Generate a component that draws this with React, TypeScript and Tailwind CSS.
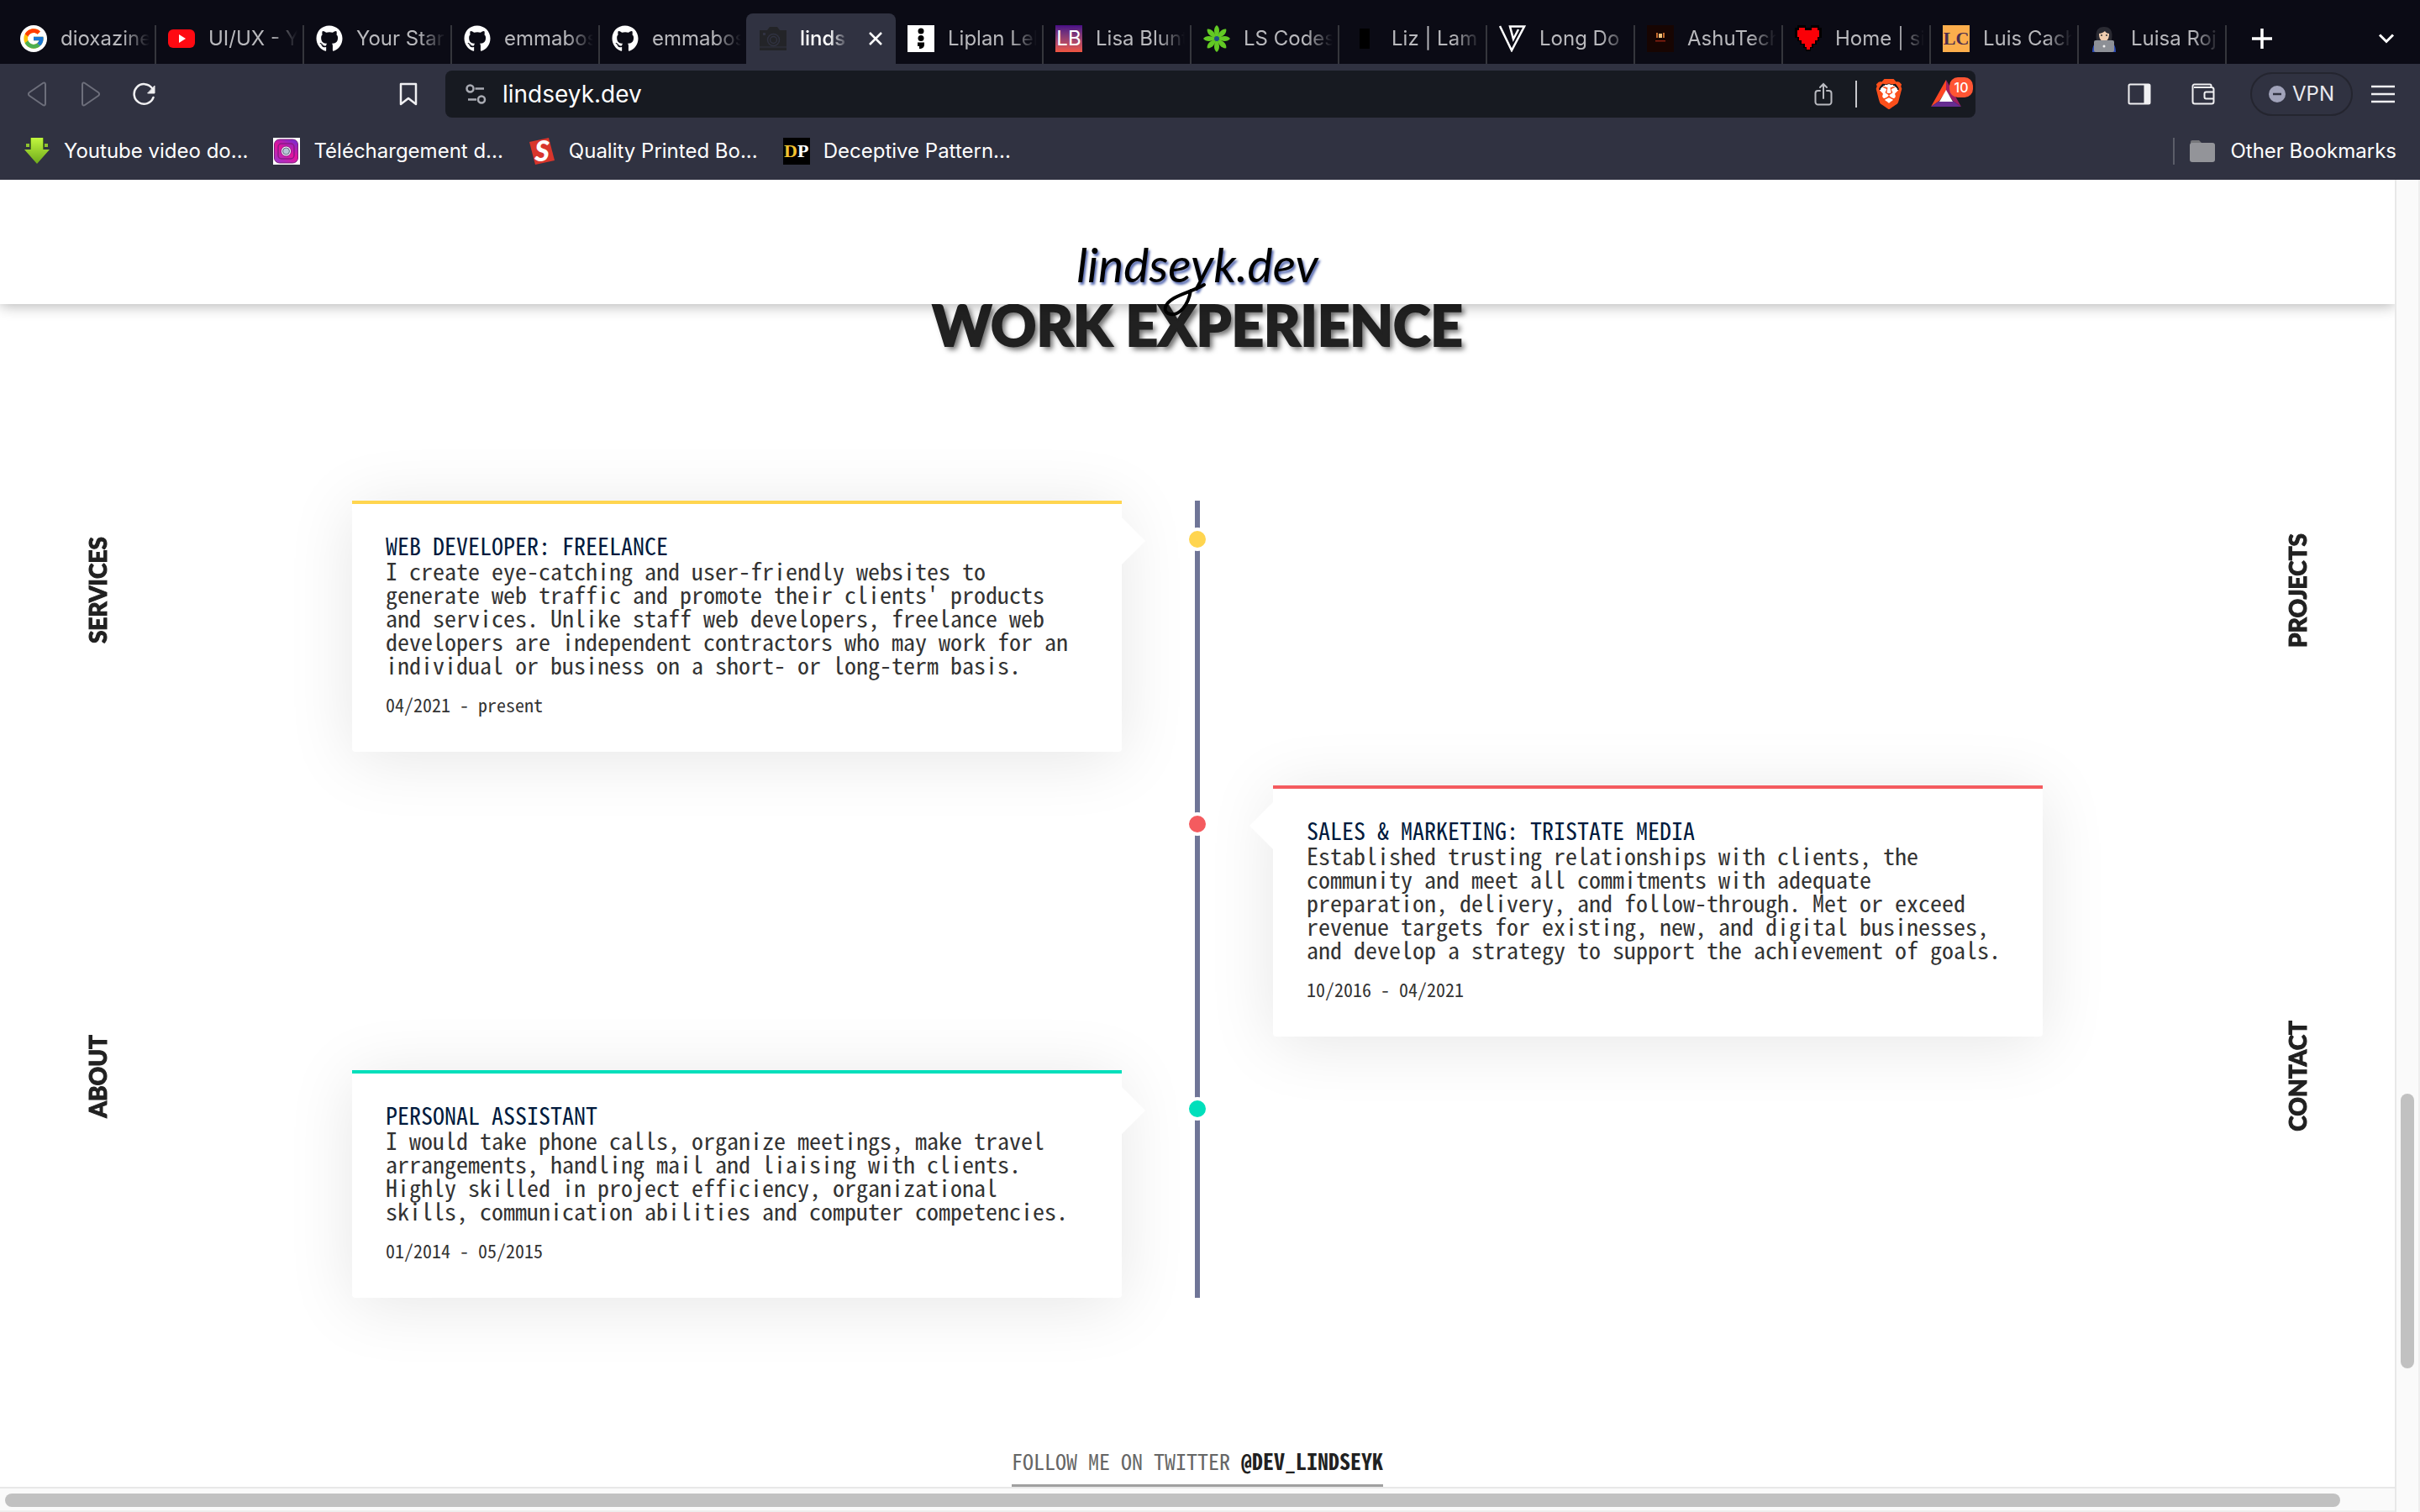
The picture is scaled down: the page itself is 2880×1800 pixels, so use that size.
import type { ReactNode } from "react";
import { FcGoogle } from "react-icons/fc";
import { FaGithub } from "react-icons/fa";
import { SiBrave } from "react-icons/si";

const mono = "font-['Noto_Sans_Mono_CJK_SC','Liberation_Mono',monospace]";

function Youtube() {
  return (
    <svg viewBox="0 0 32 32" className="size-8">
      <rect y="5" width="32" height="22" rx="6" fill="#ff0a12" />
      <path d="M13 11v10l8-5z" fill="#fff" />
    </svg>
  );
}

function Camera() {
  return (
    <svg viewBox="0 0 32 32" className="size-8">
      <path d="M0 6h9l3-4h9l3 4h8v24H0z" fill="#232428" />
      <circle cx="16.500" cy="17.500" r="7" fill="none" stroke="#303241" strokeWidth="1.500" />
      <circle cx="16.500" cy="17.500" r="4" fill="none" stroke="#303241" strokeWidth="1.500" />
      <path d="M4 9h3v3H4z" fill="#303241" />
      <path d="M0 26h32" stroke="#303241" />
    </svg>
  );
}

function Semicolon() {
  return (
    <span className="flex size-8 items-center justify-center bg-white">
      <svg viewBox="0 0 32 32" className="size-8">
        <circle cx="16" cy="7" r="3.500" />
        <circle cx="16" cy="15.500" r="3.500" />
        <path d="M12 20.500h8V23c0 3-2 5-6 5v-3h-2z" />
      </svg>
    </span>
  );
}

function Flower() {
  return (
    <svg viewBox="0 0 32 32" className="size-8">
      {[0, 45, 90, 135, 180, 225, 270, 315].map((a) => (
        <path key={a} d="M16 16C12 9 12 3 16 0C20 3 20 9 16 16z" fill="#62c924" transform={`rotate(${a} 16 16)`} />
      ))}
      <circle cx="16" cy="16" r="3" fill="#1d4f86" />
    </svg>
  );
}

function Vee() {
  return (
    <svg viewBox="0 0 32 32" className="size-8" fill="none" stroke="#fff" strokeWidth="2.500">
      <path d="M1 1l14 29L30 1.500H13l4 15 6-11.500" />
    </svg>
  );
}

function Ashu() {
  return (
    <svg viewBox="0 0 32 32" className="size-8">
      <path d="M0 0h32v32H0z" fill="#170502" />
      <path d="M11 9h2v6h-2zM19 9h2v6h-2z" fill="#c46a2c" />
      <path d="M14 10h4v5h-4z" fill="#f1c27a" />
      <path d="M10 18h12v1.500H10z" fill="#8a2010" />
    </svg>
  );
}

function Heart() {
  return (
    <svg viewBox="0 0 32 32" className="size-8">
      <path d="M3 0h10v3h6V0h10v3h3v12h-3v4h-3v4h-4v4h-3v4h-6v-4h-3v-4H6v-4H3v-4H0V3h3z" fill="#000" />
      <path d="M5 3h7v3h8V3h7v3h2v8h-2v4h-3v4h-4v4h-2v3h-4v-3h-2v-4H8v-4H5v-4H3V6h2z" fill="#fb0007" />
    </svg>
  );
}

function Technologist() {
  return (
    <svg viewBox="0 0 32 32" className="size-8">
      <path d="M7 18C5 6 9 2 16 2s11 4 9 16z" fill="#2b2b33" />
      <path d="M2 32c0-8 3-12 8-13h12c5 1 8 5 8 13z" fill="#2a49b8" />
      <path d="M10 10c2 0 5-1 7-3 1 2 3 3 5 3 0 6-2 9-6 9s-6-3-6-9z" fill="#f1cdb0" />
      <circle cx="13" cy="12" r="1" fill="#333" />
      <circle cx="19" cy="12" r="1" fill="#333" />
      <rect x="4" y="18" width="24" height="14" rx="2" fill="#8d9096" />
      <circle cx="16" cy="25" r="1.500" fill="#f2f2f2" />
    </svg>
  );
}

const github = <FaGithub className="size-8 text-white" />;

const tabs: { title: string; icon: ReactNode; active?: boolean }[] = [
  {
    title: "dioxazine",
    icon: (
      <span className="flex size-8 items-center justify-center rounded-full bg-white">
        <FcGoogle className="size-7" />
      </span>
    ),
  },
  { title: "UI/UX - Y", icon: <Youtube /> },
  { title: "Your Star", icon: github },
  { title: "emmabos", icon: github },
  { title: "emmabos", icon: github },
  { title: "linds", icon: <Camera />, active: true },
  { title: "Liplan Lel", icon: <Semicolon /> },
  {
    title: "Lisa Blunt",
    icon: (
      <span className="flex size-8 items-center justify-center bg-linear-to-b from-[#4a0a86] to-[#f0553f] text-[24px] leading-8 text-white">
        LB
      </span>
    ),
  },
  { title: "LS Codes", icon: <Flower /> },
  { title: "Liz | Lam", icon: <span className="mx-auto h-6 w-3 bg-black" /> },
  { title: "Long Do", icon: <Vee /> },
  { title: "AshuTech", icon: <Ashu /> },
  { title: "Home | si", icon: <Heart /> },
  {
    title: "Luis Cach",
    icon: (
      <span className="flex size-8 items-center justify-center bg-[#fcae4c] font-['Liberation_Serif',serif] text-[22px] leading-8 font-bold text-[#4a2c4e]">
        LC
      </span>
    ),
  },
  { title: "Luisa Roj", icon: <Technologist /> },
];

function TabStrip() {
  return (
    <div role="tablist" className="flex h-[76px] items-end bg-[#0b0b15] pl-2">
      {tabs.map((t, i) => (
        <div
          key={i}
          className={
            t.active
              ? "-mr-0.5 flex h-[60px] w-[178px] shrink-0 items-center rounded-t-lg bg-[#303241] px-4"
              : "flex h-[60px] w-44 shrink-0 items-center pl-4"
          }
        >
          <button
            role="tab"
            aria-selected={!!t.active}
            className="flex h-8 min-w-0 flex-1 items-center gap-4 self-center text-left"
          >
            <span className="flex w-8 shrink-0">{t.icon}</span>
            <span
              className={
                t.active
                  ? "w-[58px] overflow-hidden font-medium whitespace-nowrap text-white [mask-image:linear-gradient(to_right,black_60%,transparent)]"
                  : "w-[106px] overflow-hidden whitespace-nowrap text-[#b9b9bd] [mask-image:linear-gradient(to_right,black_70%,transparent)]"
              }
            >
              {t.title}
            </span>
          </button>
          {t.active ? (
            <button aria-label="Close tab" className="ml-auto">
              <svg viewBox="0 0 16 16" className="size-4" stroke="#fff" strokeWidth="2.500">
                <path d="M1 1l14 14M15 1L1 15" />
              </svg>
            </button>
          ) : (
            i !== 4 && <span className="-mr-0.5 ml-auto h-[46px] w-0.5 shrink-0 self-end bg-[#35363c]" />
          )}
        </div>
      ))}
      <button aria-label="New tab" className="ml-3 flex h-[60px] w-16 items-center justify-center">
        <svg viewBox="0 0 26 26" className="size-[26px]" stroke="#fff" strokeWidth="3.500">
          <path d="M13 1v24M1 13h24" />
        </svg>
      </button>
      <button aria-label="Search tabs" className="mr-2 ml-auto flex h-[60px] w-16 items-center justify-center">
        <svg viewBox="0 0 20 12" className="h-3 w-5" fill="none" stroke="#fff" strokeWidth="3">
          <path d="M2 1.500l8 8 8-8" />
        </svg>
      </button>
    </div>
  );
}

function Toolbar() {
  return (
    <div className="flex h-[72px] items-center">
      <div className="flex w-[530px] items-center px-3">
        <button aria-label="Back" className="flex w-16 justify-center">
          <svg viewBox="0 0 24 30" className="h-[30px] w-6" fill="none" stroke="#6d6f7b" strokeWidth="2" strokeLinejoin="round">
            <path d="M22 3.500v23c0 2-1.500 2.500-3 1.500L3 17c-1.500-1-1.500-3 0-4L19 2c1.500-1 3-.5 3 1.500z" />
          </svg>
        </button>
        <button aria-label="Forward" className="flex w-16 justify-center">
          <svg viewBox="0 0 24 30" className="h-[30px] w-6" fill="none" stroke="#6d6f7b" strokeWidth="2" strokeLinejoin="round">
            <path d="M2 3.500v23c0 2 1.500 2.500 3 1.500l16-11c1.500-1 1.500-3 0-4L5 2C3.500 1 2 1.500 2 3.500z" />
          </svg>
        </button>
        <button aria-label="Reload" className="flex w-16 justify-center">
          <svg viewBox="0 0 28 28" className="size-7" fill="none" stroke="#f0f0f2" strokeWidth="2.500" strokeLinecap="round">
            <path d="M24.500 18A11.800 11.800 0 1 1 23 7" />
            <path d="M26 4.500v8.500h-8z" fill="#f0f0f2" strokeWidth="1" />
          </svg>
        </button>
        <button aria-label="Bookmark this page" className="ml-auto flex w-16 justify-center">
          <svg viewBox="0 0 22 28" className="h-7 w-[22px]" fill="none" stroke="#f0f0f2" strokeWidth="2.500" strokeLinejoin="round">
            <path d="M2 2h18v24l-9-7-9 7z" />
          </svg>
        </button>
      </div>
      <div className="flex h-14 min-w-0 flex-1 items-center rounded-lg bg-[#171a21] pl-6">
        <svg viewBox="0 0 26 26" className="size-[26px]" fill="none" stroke="#a9abb3" strokeWidth="2.500">
          <circle cx="5.500" cy="6.500" r="4" />
          <path d="M11.500 6.500H22M3 19.500h10" />
          <circle cx="19" cy="19.500" r="4" />
        </svg>
        <label className="ml-[18px] flex min-w-0 flex-1">
          <span className="sr-only">Address</span>
          <input defaultValue="lindseyk.dev" className="w-full bg-transparent text-[28px] text-white outline-none" />
        </label>
        <button aria-label="Share" className="flex w-12 justify-center">
          <svg viewBox="0 0 22 28" className="h-7 w-[22px]" fill="none" stroke="#b9bac0" strokeWidth="2" strokeLinecap="round">
            <path d="M7 10H4.500A3 3 0 0 0 1.500 13v10.500a3 3 0 0 0 3 3h13a3 3 0 0 0 3-3V13a3 3 0 0 0-3-3H15M11 19V2M7 6l4-4 4 4" />
          </svg>
        </button>
        <span className="ml-3.5 h-8 w-0.5 bg-[#c8c8cc]" />
        <button aria-label="Brave Shields" className="ml-3.5 flex w-12 justify-center">
          <span className="flex h-9 w-9 items-center justify-center bg-[radial-gradient(white_45%,transparent_46%)]">
            <SiBrave className="size-9 text-[#fb4f1b]" />
          </span>
        </button>
        <button aria-label="Rewards" className="relative mr-[3px] ml-4 flex h-9 w-[60px] items-end pl-2.5">
          <svg viewBox="0 0 36 32" className="mb-[3px] h-8 w-9">
            <path d="M18 0L0 32l10-7 8-12z" fill="#ff4724" />
            <path d="M18 0l18 32-10-7-8-12z" fill="#9e1f63" />
            <path d="M0 32h36l-10-7H10z" fill="#662d91" />
            <path d="M18 12l8 14H10z" fill="#fff" />
          </svg>
          <span className="absolute -top-0.5 right-0 flex h-6 w-7 items-center justify-center rounded-[10px] bg-[#ff5533] text-[16px] leading-6 font-medium text-white">
            10
          </span>
        </button>
      </div>
      <div className="flex w-[529px] items-center justify-end pr-5">
        <button aria-label="Show sidebar" className="mr-7 flex w-12 justify-center">
          <svg viewBox="0 0 28 26" className="h-[26px] w-7">
            <rect x="1.500" y="1.500" width="25" height="23" rx="1.500" fill="none" stroke="#f0f0f2" strokeWidth="2" />
            <path d="M19.500 1.500h7v23h-7z" fill="#f0f0f2" />
          </svg>
        </button>
        <button aria-label="Wallet" className="mr-8 flex w-12 justify-center">
          <svg viewBox="0 0 28 26" className="h-[26px] w-7" fill="none" stroke="#f0f0f2" strokeWidth="2" strokeLinejoin="round">
            <path d="M23.500 5V3a1.500 1.500 0 0 0-1.500-1.500H3.500A2 2 0 0 0 1.500 3.500V22a2.500 2.500 0 0 0 2.500 2.500h20a2.500 2.500 0 0 0 2.500-2.500V7.500A2.500 2.500 0 0 0 24 5H3" />
            <path d="M26 10.500h-8.500a2 2 0 0 0-2 2v4a2 2 0 0 0 2 2H26" />
          </svg>
        </button>
        <button className="flex h-[52px] w-[122px] items-center justify-center gap-2 rounded-full border-2 border-[#24252f] text-[#e9e9ee]">
          <svg viewBox="0 0 20 20" className="size-5">
            <circle cx="10" cy="10" r="10" fill="#a1a3ba" />
            <path d="M5 10h10" stroke="#303241" strokeWidth="2.500" />
          </svg>
          VPN
        </button>
        <button aria-label="Menu" className="ml-3 flex w-12 justify-center">
          <svg viewBox="0 0 28 22" className="h-[22px] w-7" stroke="#f0f0f2" strokeWidth="2.500">
            <path d="M0 2h28M0 11h28M0 20h28" />
          </svg>
        </button>
      </div>
    </div>
  );
}

const bookmarks: { title: string; icon: ReactNode }[] = [
  {
    title: "Youtube video do...",
    icon: (
      <svg viewBox="0 0 32 32" className="size-8">
        <defs>
          <linearGradient id="lime" x2="0" y2="1">
            <stop stopColor="#c2f73e" />
            <stop offset="1" stopColor="#6ea91c" />
          </linearGradient>
        </defs>
        <path d="M8 0h16v14h7L16 31 1 14h7z" fill="url(#lime)" />
        <path d="M8.500 0v14M23.500 0v14" stroke="#4f7a16" />
        <path d="M3 7h4v4H3zM25 7h4v4h-4z" fill="#8ec42d" />
      </svg>
    ),
  },
  {
    title: "Téléchargement d...",
    icon: (
      <svg viewBox="0 0 32 32" className="size-8">
        <defs>
          <linearGradient id="insta" x1="0.800" x2="0.200" y2="1">
            <stop stopColor="#7a2bd0" />
            <stop offset="0.500" stopColor="#e4149b" />
            <stop offset="1" stopColor="#a233c9" />
          </linearGradient>
        </defs>
        <path d="M0 0h32v32H0z" fill="#fff" />
        <rect x="1.500" y="2" width="28" height="28" rx="6" fill="url(#insta)" stroke="#7b1d78" />
        <rect x="6" y="7" width="19" height="18" rx="4" fill="none" stroke="#8b1a86" strokeWidth="1.500" />
        <circle cx="15.500" cy="16" r="6" fill="#fff" stroke="#8b1a86" />
        <circle cx="15.500" cy="16" r="4" fill="#b6c6d6" stroke="#59627c" />
      </svg>
    ),
  },
  {
    title: "Quality Printed Bo...",
    icon: (
      <svg viewBox="0 0 32 32" className="size-8">
        <path d="M1 5L24 0l7 27L8 32z" fill="#d8352c" />
        <text x="16" y="28" textAnchor="middle" fill="#fff" fontFamily="Lato" fontWeight="900" fontStyle="italic" fontSize="34">
          S
        </text>
      </svg>
    ),
  },
  {
    title: "Deceptive Pattern...",
    icon: (
      <span className="flex size-8 items-center justify-center bg-black font-['Liberation_Serif',serif] text-[22px] leading-8 font-bold text-white">
        <span className="text-[#f2c230]">D</span>P
      </span>
    ),
  },
];

function Bookmarks() {
  return (
    <nav className="flex h-[66px] items-center gap-[30px] px-7 pb-0.5 text-white">
      {bookmarks.map((b) => (
        <a key={b.title} href="#" className="flex items-center gap-4 whitespace-nowrap">
          {b.icon}
          {b.title}
        </a>
      ))}
      <a href="#" className="ml-auto flex items-center whitespace-nowrap">
        <span className="mr-[18px] h-8 w-0.5 bg-[#5b5d68]" />
        <svg viewBox="0 0 30 26" className="mr-[18px] h-[26px] w-[30px]">
          <path d="M1 4V2a2 2 0 0 1 2-2h8l3 3v2z" fill="#76777b" />
          <rect x="0" y="3" width="30" height="23" rx="3" fill="#939499" />
        </svg>
        Other Bookmarks
      </a>
    </nav>
  );
}

function SideNav({ links }: { links: string[] }) {
  return (
    <nav className="flex w-[232px] shrink-0 flex-col items-center pt-[52px] pb-[200px]">
      {links.map((l) => (
        <div key={l} className="flex flex-1 items-center">
          <a
            href="#"
            className="rotate-180 font-['Lato',sans-serif] text-[28px] leading-9 font-black text-[#212121] [-webkit-text-stroke:1px_#212121] [writing-mode:vertical-rl]"
          >
            {l}
          </a>
        </div>
      ))}
    </nav>
  );
}

const jobs = [
  {
    title: "WEB DEVELOPER: FREELANCE",
    body: "I create eye-catching and user-friendly websites to generate web traffic and promote their clients' products and services. Unlike staff web developers, freelance web developers are independent contractors who may work for an individual or business on a short- or long-term basis.",
    date: "04/2021 - present",
    border: "border-[#ffd54f]",
    dot: "bg-[#ffd54f]",
    left: true,
  },
  {
    title: "SALES & MARKETING: TRISTATE MEDIA",
    body: "Established trusting relationships with clients, the community and meet all commitments with adequate preparation, delivery, and follow-through. Met or exceed revenue targets for existing, new, and digital businesses, and develop a strategy to support the achievement of goals.",
    date: "10/2016 - 04/2021",
    border: "border-[#f45b5f]",
    dot: "bg-[#f45b5f]",
    left: false,
  },
  {
    title: "PERSONAL ASSISTANT",
    body: "I would take phone calls, organize meetings, make travel arrangements, handling mail and liaising with clients. Highly skilled in project efficiency, organizational skills, communication abilities and computer competencies.",
    date: "01/2014 - 05/2015",
    border: "border-[#00dfbb]",
    dot: "bg-[#00dfbb]",
    left: true,
  },
];

function Job({ job }: { job: (typeof jobs)[number] }) {
  return (
    <li className="grid grid-cols-[1fr_180px_1fr]">
      <div className="relative col-start-2 row-start-1">
        <span
          className={`absolute top-8 left-1/2 size-7 -translate-x-1/2 rounded-full border-4 border-white ${job.dot}`}
        />
      </div>
      <article
        className={`relative row-start-1 rounded-b-sm border-t-4 bg-white px-10 pt-[33px] pb-9 shadow-[0_8px_80px_rgba(0,0,0,0.1)] ${job.border} ${
          job.left ? "col-start-1" : "col-start-3"
        }`}
      >
        <span
          className={
            job.left
              ? "absolute top-4 left-full h-14 w-7 bg-white [clip-path:polygon(0_0,100%_50%,0_100%)]"
              : "absolute top-4 right-full h-14 w-7 bg-white [clip-path:polygon(100%_0,0_50%,100%_100%)]"
          }
        />
        <h3 className={`text-[28px] leading-8 text-[#001a3d] ${mono}`}>{job.title}</h3>
        <p className={`text-[28px] leading-7 text-[#333333] ${mono}`}>{job.body}</p>
        <time className={`mt-3 block text-[22px] leading-[42px] text-[#333333] ${mono}`}>{job.date}</time>
      </article>
    </li>
  );
}

export default function App() {
  return (
    <div className="flex h-screen flex-col overflow-hidden bg-white font-['Inter',sans-serif] text-[24px] leading-8">
      <div className="shrink-0 bg-[#303241]">
        <TabStrip />
        <Toolbar />
        <Bookmarks />
      </div>
      <div className="flex min-h-0 flex-1">
        <div className="flex min-w-0 flex-1 flex-col overflow-hidden">
          <header className="relative z-10 flex h-[148px] shrink-0 justify-center bg-white pt-16 shadow-[0_2px_16px_rgba(0,0,0,0.3)]">
            <a
              href="#"
              className="relative h-[92px] font-['Lato',sans-serif] text-[57px] leading-[72px] text-black italic [text-shadow:2px_3px_3px_#5468b0]"
            >
              lindseyk.dev
              <svg
                viewBox="0 0 60 44"
                className="absolute top-[58px] left-1/2 h-11 w-[60px] -translate-x-[42px]"
                fill="none"
                stroke="#000"
                strokeWidth="4"
                strokeLinecap="round"
              >
                <path d="M34 10C31 28 20 40 10 38C0 36 2 26 14 19C24 13 38 10 50 3" />
              </svg>
            </a>
          </header>
          <div className="flex min-h-0 flex-1 overflow-hidden">
            <SideNav links={["SERVICES", "ABOUT"]} />
            <main className="flex min-w-0 flex-1 flex-col items-center">
              <h2 className="-mt-4 shrink-0 font-['Lato',sans-serif] text-[67px] leading-[80px] font-black text-[#212121] [-webkit-text-stroke:2px_#212121] [text-shadow:4px_4px_6px_rgba(0,0,0,0.6)]">
                WORK EXPERIENCE
              </h2>
              <ol className="relative mt-[170px] flex w-full max-w-[2012px] shrink-0 flex-col gap-10">
                <li aria-hidden className="absolute inset-y-0 left-1/2 w-1.5 -translate-x-1/2 bg-[#6f7597]" />
                {jobs.map((j) => (
                  <Job key={j.title} job={j} />
                ))}
              </ol>
              <p className={`mt-[174px] shrink-0 border-b-[3px] border-[#a0a0a0] pb-2 text-[26px] leading-10 text-[#666666] ${mono}`}>
                FOLLOW ME ON TWITTER{" "}
                <a href="#" className="font-bold text-[#212121]">
                  @DEV_LINDSEYK
                </a>
              </p>
            </main>
            <SideNav links={["PROJECTS", "CONTACT"]} />
          </div>
          <div className="h-[30px] shrink-0 border-y-2 border-t-[#e8e8e8] border-b-[#eeeeee] bg-[#fafafa] pt-1.5 pr-[65px] pl-1.5">
            <div className="h-4 rounded-full bg-[#c1c1c1]" />
          </div>
        </div>
        <div className="flex w-[30px] shrink-0 flex-col items-center border-x-2 border-l-[#e8e8e8] border-r-[#eeeeee] bg-[#fafafa]">
          <div className="flex-[1088]" />
          <div className="w-4 flex-[327] rounded-full bg-[#c1c1c1]" />
          <div className="flex-[171]" />
        </div>
      </div>
    </div>
  );
}
